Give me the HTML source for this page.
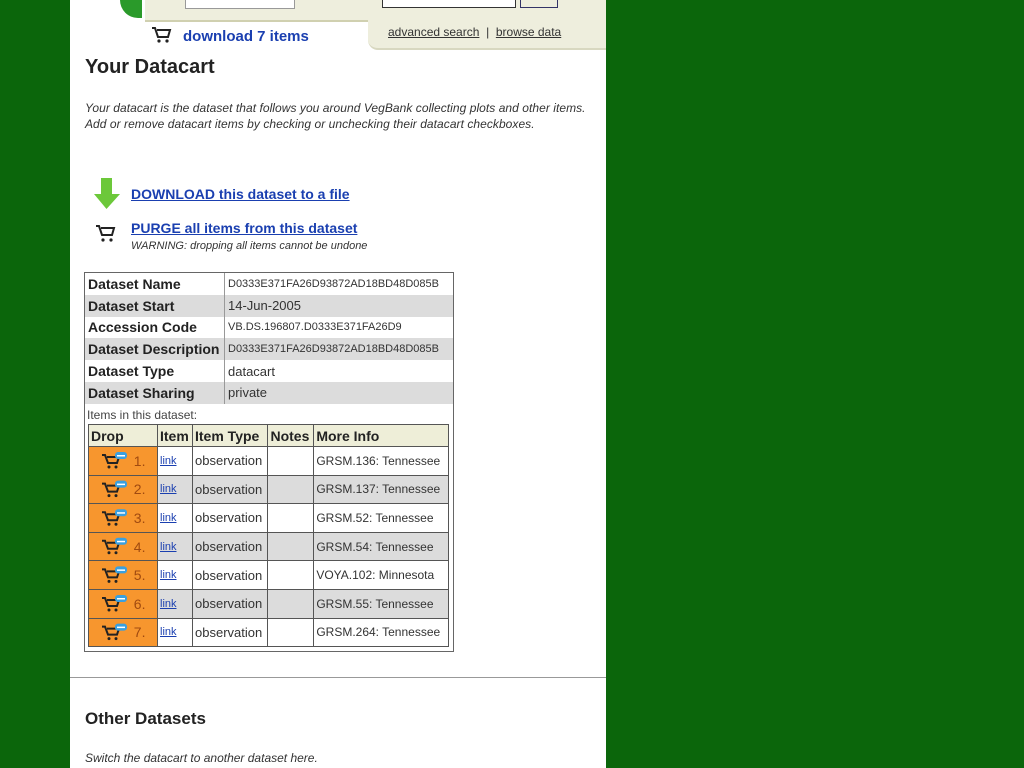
<!DOCTYPE html>
<html><head><meta charset="utf-8"><style>
body{margin:0;width:1024px;height:768px;background:#0b660b;position:relative;overflow:hidden;font-family:"Liberation Sans",sans-serif}
.pg{position:absolute;left:70px;top:0;width:536px;height:768px;background:#fff}
.a{position:absolute;white-space:nowrap}
.lk{color:#1a3fb0;text-decoration:underline;font-weight:bold}
table{border-collapse:collapse}
.t1{position:absolute;left:85px;top:273px;width:368px}
.t1 td{height:21.8px;padding:0 3px;font-size:13px;color:#333;border-right:1px solid #999}
.t1 td.l{font-weight:bold;font-size:14px;color:#222;width:133px}
.t1 td.v{font-size:11px;border-right:0}
.t1 td.w{border-right:0}
.g{background:#dcdcdc}
.t2{position:absolute;left:88px;top:424px;width:361px;border:1px solid #777}
.t2 td{height:27.6px;border:1px solid #555;font-size:13px;color:#333;padding:0 2px}
.t2 tr.h td{background:#eeeed8;font-weight:bold;font-size:14px;height:21px;color:#222;border-bottom:1px solid #555}
.t2 td.d{background:#f7962e;color:#a04a10;width:64px;font-size:14px}
.t2 td.k{width:30px;font-size:11px}
.t2 td.k span{color:#1a3fb0;text-decoration:underline}
.t2 td.m{font-size:12px}
</style></head><body>
<div class="pg"></div>
<div class="a" style="left:145px;top:0;width:461px;height:20px;background:#eeeedd;border-bottom:2px solid #d0d0b0"></div>
<div class="a" style="left:120px;top:0;width:22px;height:18px;background:#2a9a2a;border-radius:0 0 0 22px"></div>
<div class="a" style="left:185px;top:0;width:108px;height:8px;background:#fff;border:1px solid #999;border-top:0"></div>
<div class="a" style="left:382px;top:0;width:132px;height:7px;background:#fff;border:1px solid #333;border-top:0"></div>
<div class="a" style="left:520px;top:0;width:36px;height:7px;border:1px solid #336;border-top:0"></div>
<div class="a" style="left:368px;top:20px;width:238px;height:28px;background:#eeeedd;border-radius:0 0 0 10px;border-bottom:2px solid #d8d8c0"></div>
<div class="a" style="left:388px;top:25px;font-size:12px;color:#333"><u>advanced search</u> &nbsp;|&nbsp; <u>browse data</u></div>
<svg class="a" style="left:151px;top:26px" width="22" height="18" viewBox="0 0 22 18"><path d="M1 2h3l3 9h10l2-7H6" fill="none" stroke="#222" stroke-width="2"/><circle cx="8" cy="15" r="1.6" fill="#222"/><circle cx="16" cy="15" r="1.6" fill="#222"/></svg>
<div class="a" style="left:183px;top:28px;font-size:15px;font-weight:bold;color:#1a3fb0">download 7 items</div>
<div class="a" style="left:85px;top:56px;font-size:20px;font-weight:bold;color:#222">Your Datacart</div>
<div class="a" style="left:85px;top:100px;font-size:12px;font-style:italic;color:#333;line-height:16px;letter-spacing:0.05px">Your datacart is the dataset that follows you around VegBank collecting plots and other items.<br>Add or remove datacart items by checking or unchecking their datacart checkboxes.</div>
<svg class="a" style="left:93px;top:178px" width="28" height="32" viewBox="0 0 28 32"><path d="M8 0h11v16h8L13.5 31 1 16h7z" fill="#6cc83a"/></svg>
<div class="a lk" style="left:131px;top:186px;font-size:14px">DOWNLOAD this dataset to a file</div>
<svg class="a" style="left:95px;top:223px" width="22" height="20" viewBox="0 0 22 20"><path d="M1 3h3l3 9h10l2-7H6" fill="none" stroke="#222" stroke-width="2"/><circle cx="8" cy="17" r="1.6" fill="#222"/><circle cx="16" cy="17" r="1.6" fill="#222"/></svg>
<div class="a lk" style="left:131px;top:220px;font-size:14px">PURGE all items from this dataset</div>
<div class="a" style="left:131px;top:240px;font-size:11px;font-style:italic;color:#333">WARNING: dropping all items cannot be undone</div>
<div class="a" style="left:84px;top:272px;width:368px;height:378px;border:1px solid #666"></div>
<table class="t1">
<tr><td class="l">Dataset Name</td><td class="v">D0333E371FA26D93872AD18BD48D085B</td></tr>
<tr class="g"><td class="l">Dataset Start</td><td class="w">14-Jun-2005</td></tr>
<tr><td class="l">Accession Code</td><td class="v">VB.DS.196807.D0333E371FA26D9</td></tr>
<tr class="g"><td class="l">Dataset Description</td><td class="v">D0333E371FA26D93872AD18BD48D085B</td></tr>
<tr><td class="l">Dataset Type</td><td class="w">datacart</td></tr>
<tr class="g"><td class="l">Dataset Sharing</td><td class="w">private</td></tr>
</table>
<div class="a" style="left:87px;top:408px;font-size:12px;color:#444">Items in this dataset:</div>
<table class="t2">
<tr class="h"><td>Drop</td><td>Item</td><td>Item Type</td><td>Notes</td><td>More Info</td></tr>
<tr><td class="d">&nbsp;&nbsp;&nbsp;&nbsp;&nbsp;&nbsp;&nbsp;&nbsp;&nbsp;&nbsp;&nbsp;1.</td><td class="k"><span>link</span></td><td>observation</td><td></td><td class="m">GRSM.136: Tennessee</td></tr>
<tr class="g"><td class="d">&nbsp;&nbsp;&nbsp;&nbsp;&nbsp;&nbsp;&nbsp;&nbsp;&nbsp;&nbsp;&nbsp;2.</td><td class="k"><span>link</span></td><td>observation</td><td></td><td class="m">GRSM.137: Tennessee</td></tr>
<tr><td class="d">&nbsp;&nbsp;&nbsp;&nbsp;&nbsp;&nbsp;&nbsp;&nbsp;&nbsp;&nbsp;&nbsp;3.</td><td class="k"><span>link</span></td><td>observation</td><td></td><td class="m">GRSM.52: Tennessee</td></tr>
<tr class="g"><td class="d">&nbsp;&nbsp;&nbsp;&nbsp;&nbsp;&nbsp;&nbsp;&nbsp;&nbsp;&nbsp;&nbsp;4.</td><td class="k"><span>link</span></td><td>observation</td><td></td><td class="m">GRSM.54: Tennessee</td></tr>
<tr><td class="d">&nbsp;&nbsp;&nbsp;&nbsp;&nbsp;&nbsp;&nbsp;&nbsp;&nbsp;&nbsp;&nbsp;5.</td><td class="k"><span>link</span></td><td>observation</td><td></td><td class="m">VOYA.102: Minnesota</td></tr>
<tr class="g"><td class="d">&nbsp;&nbsp;&nbsp;&nbsp;&nbsp;&nbsp;&nbsp;&nbsp;&nbsp;&nbsp;&nbsp;6.</td><td class="k"><span>link</span></td><td>observation</td><td></td><td class="m">GRSM.55: Tennessee</td></tr>
<tr><td class="d">&nbsp;&nbsp;&nbsp;&nbsp;&nbsp;&nbsp;&nbsp;&nbsp;&nbsp;&nbsp;&nbsp;7.</td><td class="k"><span>link</span></td><td>observation</td><td></td><td class="m">GRSM.264: Tennessee</td></tr>
</table>
<svg class="a" style="left:101px;top:452px" width="28" height="192" viewBox="0 0 28 192">
<g id="c"><path d="M1 3h3l3 8h9l2-6H6" fill="none" stroke="#222" stroke-width="2"/><circle cx="8" cy="15" r="1.5" fill="#222"/><circle cx="15" cy="15" r="1.5" fill="#222"/><rect x="14" y="0" width="12" height="7" rx="3" fill="#3aa0e0"/><rect x="16" y="3" width="8" height="1.5" fill="#fff"/></g>
<use href="#c" y="28.6"/><use href="#c" y="57.2"/><use href="#c" y="85.8"/><use href="#c" y="114.4"/><use href="#c" y="143"/><use href="#c" y="171.6"/>
</svg>
<div class="a" style="left:70px;top:677px;width:536px;height:1px;background:#999"></div>
<div class="a" style="left:85px;top:709px;font-size:17px;font-weight:bold;color:#222">Other Datasets</div>
<div class="a" style="left:85px;top:751px;font-size:12px;font-style:italic;color:#333">Switch the datacart to another dataset here.</div>
</body></html>
